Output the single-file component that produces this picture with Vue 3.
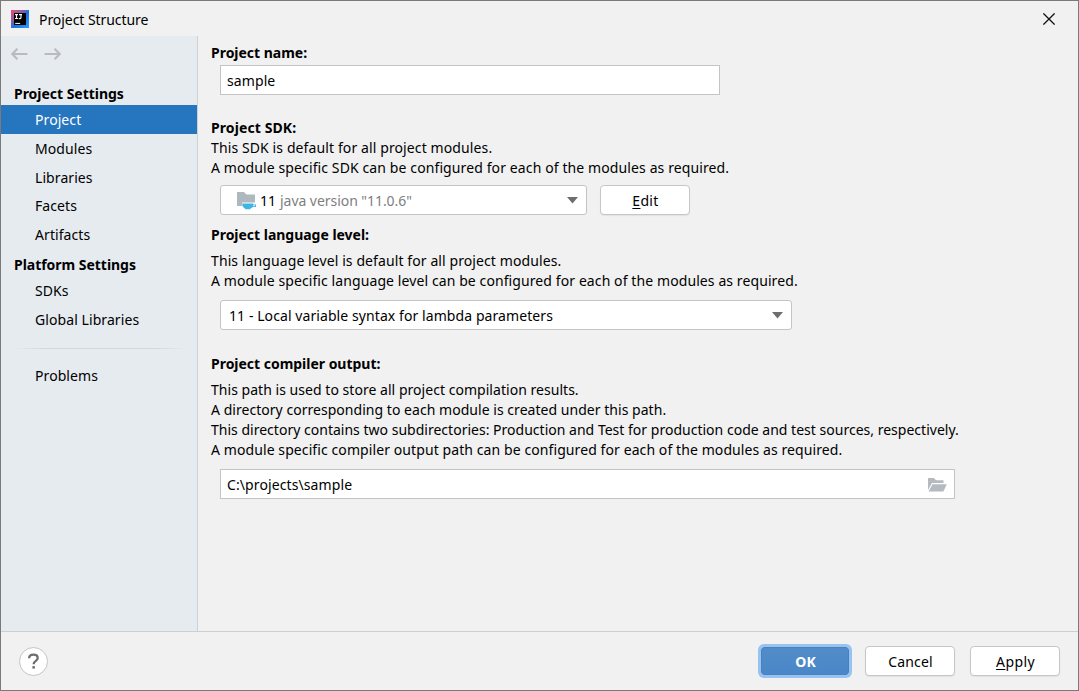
<script setup>
import { ref } from 'vue'

const selected = ref('Project')
const groups = [
  { title: 'Project Settings', items: ['Project', 'Modules', 'Libraries', 'Facets', 'Artifacts'] },
  { title: 'Platform Settings', items: ['SDKs', 'Global Libraries'] },
]
const projectName = ref('sample')
const outputPath = ref('C:\\projects\\sample')
</script>

<template>
  <div class="window">
    <header class="titlebar">
      <svg class="logo" width="18" height="18" viewBox="0 0 18 18">
        <defs>
          <linearGradient id="logo-bg" x1="0" y1="0" x2="1" y2="1">
            <stop offset="0" stop-color="#f0477c" />
            <stop offset="0.3" stop-color="#9b5a9c" />
            <stop offset="0.55" stop-color="#1473e0" />
            <stop offset="1" stop-color="#2f9bff" />
          </linearGradient>
        </defs>
        <rect width="18" height="18" fill="url(#logo-bg)" />
        <rect x="3" y="3" width="12" height="12" fill="#000" />
        <path d="M4 4.6h3M5.5 4.6v4M4 8.5h3M8 4.6h3M10 4.6v3q0 1-1 1H7.8" fill="none" stroke="#fff" stroke-width="1.1" />
        <path d="M4.2 13.4h5" stroke="#fff" stroke-width="1" />
      </svg>
      <span class="title">Project Structure</span>
      <svg class="close" width="12" height="12" viewBox="0 0 12 12">
        <path d="M0.4 0.4L11.6 11.6M11.6 0.4L0.4 11.6" stroke="#111" stroke-width="1.3" />
      </svg>
    </header>

    <div class="body">
      <aside class="sidebar">
        <div class="history">
          <svg width="17" height="12" viewBox="0 0 17 12" class="arrow">
            <path d="M16.4 6H1.2M6.4 0.8L1.2 6l5.2 5.2" />
          </svg>
          <svg width="17" height="12" viewBox="0 0 17 12" class="arrow">
            <path d="M0.6 6h15.2M10.6 0.8L15.8 6l-5.2 5.2" />
          </svg>
        </div>
        <section v-for="g in groups" :key="g.title">
          <h2 class="group">{{ g.title }}</h2>
          <div
            v-for="item in g.items"
            :key="item"
            class="item"
            :class="{ active: item === selected }"
            @click="selected = item"
          >{{ item }}</div>
        </section>
        <div class="rule"></div>
        <div class="item">Problems</div>
      </aside>

      <main class="content">
        <h3>Project name:</h3>
        <div class="field name"><span class="sample">{{ projectName }}</span></div>

        <h3 class="sdk-title">Project SDK:</h3>
        <p class="wide">This SDK is default for all project modules.</p>
        <p class="medium">A module specific SDK can be configured for each of the modules as required.</p>
        <div class="sdk-row">
          <div class="combo sdk">
            <svg class="sdk-icon" width="20" height="18" viewBox="0 0 20 18">
              <path d="M0 0h7l2.5 2.5H18V10.5H5V14H0z" fill="#afb8be" />
              <path d="M5.2 11.5h11v.9h2.8v2.6h-3.2q-.7 1-2 1.3l-.6 1H8.4l-.7-1q-2.5-1-2.5-4.8z" fill="#3eb5e2" />
              <path d="M16.2 13.2h1.7v1h-1.8z" fill="#fff" />
            </svg>
            <span class="ver">11</span>
            <span class="detail">java version "11.0.6"</span>
            <svg class="caret" width="11" height="7" viewBox="0 0 11 7"><path d="M0 0h11L5.5 6.6z" /></svg>
          </div>
          <button class="btn edit"><span><u>E</u>dit</span></button>
        </div>

        <h3 class="level-title">Project language level:</h3>
        <p class="language">This language level is default for all project modules.</p>
        <p class="language">A module specific language level can be configured for each of the modules as required.</p>
        <div class="combo level">
          <span class="level-text">11 - Local variable syntax for lambda parameters</span>
          <svg class="caret" width="11" height="7" viewBox="0 0 11 7"><path d="M0 0h11L5.5 6.6z" /></svg>
        </div>

        <h3 class="output-title">Project compiler output:</h3>
        <p class="narrow">This path is used to store all project compilation results.</p>
        <p class="narrow">A directory corresponding to each module is created under this path.</p>
        <p class="tight">This directory contains two subdirectories: Production and Test for production code and test sources, respectively.</p>
        <p class="regular">A module specific compiler output path can be configured for each of the modules as required.</p>
        <div class="field path">
          <span class="path-text">{{ outputPath }}</span>
          <svg class="folder" width="19" height="14" viewBox="0 0 19 14">
            <path d="M0 0h6l2 2.2h7.5V5H4L0 12z" fill="#b4bac0" />
            <path d="M4.4 6.2H18.8L15.4 13.6H0.6z" fill="#b4bac0" />
          </svg>
        </div>
      </main>
    </div>

    <footer class="footer">
      <button class="help">
        <svg width="13" height="17" viewBox="0 0 13 17">
          <path d="M2.1 5.3Q2.1 1.7 6.4 1.7Q10.7 1.7 10.7 5Q10.7 6.7 8.6 8.1Q6.6 9.4 6.6 11.3" fill="none" stroke="#6e6e6e" stroke-width="2.3" />
          <rect x="5.4" y="13.1" width="2.5" height="2.5" fill="#6e6e6e" />
        </svg>
      </button>
      <button class="btn ok"><span>OK</span></button>
      <button class="btn"><span class="cancel">Cancel</span></button>
      <button class="btn"><span class="apply"><u>A</u>pply</span></button>
    </footer>
  </div>
</template>

<style>
body { margin: 0; }
</style>

<style scoped>
* { box-sizing: border-box; }
.window {
  width: 1079px;
  height: 691px;
  display: flex;
  flex-direction: column;
  border: 1px solid #7b7a7b;
  background: #f1f1f1;
  color: #000;
  font: 14px/20px "Noto Sans", "Open Sans", sans-serif;
  white-space: nowrap;
  overflow: hidden;
}
.titlebar {
  flex: none;
  height: 35px;
  display: flex;
  align-items: center;
  padding: 1px 23px 0 10px;
}
.title { margin-left: 10px; padding-top: 1px; letter-spacing: -0.06px; }
.close { margin-left: auto; }
.body { flex: none; height: 596px; display: flex; border-bottom: 1px solid #cfcfcf; }
.sidebar { width: 197px; background: #e6ebf0; border-right: 1px solid #cdd1d4; }
.history { height: 47px; display: flex; gap: 16px; padding: 12px 0 0 10px; }
.arrow { fill: none; stroke: #b9bbbd; stroke-width: 2.1; }
.group { margin: 0; padding-left: 13px; height: 22px; font-size: 14px; line-height: 22px; font-weight: 700; letter-spacing: -0.03px; }
section + section .group { height: 28px; line-height: 32px; }
.item { height: 28.8px; line-height: 29px; padding-left: 34px; letter-spacing: 0.08px; }
.active { background: #2675bf; color: #fff; }
section + section .item { line-height: 28px; }
.rule {
  height: 1px;
  margin: 13px 10px 12px 12px;
  background: linear-gradient(90deg, transparent, #d3d7db 18%, #d3d7db 82%, transparent);
}
.content { padding: 7px 0 0 13px; }
h3 { margin: 0; font-size: 14px; line-height: 20px; font-weight: 700; letter-spacing: -0.02px; }
p { margin: 0; }
.wide { letter-spacing: 0.11px; }
.medium { letter-spacing: 0.11px; }
.language { letter-spacing: 0.095px; }
.regular { letter-spacing: 0.09px; }
.narrow { letter-spacing: 0.035px; }
.tight { letter-spacing: 0.012px; }
.field, .combo {
  height: 30px;
  margin-left: 9px;
  display: flex;
  align-items: center;
  background: #fff;
  border: 1px solid #c4c4c4;
}
.field span, .combo span { padding-top: 2px; }
.combo { border-radius: 3px; }
.name { width: 500px; margin-top: 2px; padding-left: 6px; }
.sample { letter-spacing: 0.1px; }
.sdk-title { margin-top: 23px; letter-spacing: 0.1px; }
.sdk-row { display: flex; gap: 13px; margin-top: 7px; }
.sdk { width: 367px; padding: 0 8px 0 16px; }
.sdk-icon { margin-top: 2px; }
.ver { margin-left: 3px; }
.detail { margin-left: 4px; color: #808080; letter-spacing: -0.05px; }
.caret { margin-left: auto; fill: #6e6e6e; }
.level-title { margin-top: 10px; margin-bottom: 6px; }
.level { width: 572px; margin-top: 9px; padding: 0 8px; }
.level-text { letter-spacing: 0.08px; }
.output-title { margin-top: 24px; margin-bottom: 6px; }
.path { width: 735px; margin-top: 9px; padding: 0 7px 0 6px; }
.path-text { letter-spacing: 0.1px; }
.folder { margin-left: auto; margin-top: 1px; }
.btn {
  width: 90px;
  height: 30px;
  padding: 2px 0 0 1px;
  font: inherit;
  color: #000;
  background: #fff;
  border: 1px solid #c6c6c6;
  border-radius: 4px;
  box-shadow: 0 1px 1px #e2e2e2;
}
.btn u { text-decoration-thickness: 1px; text-underline-offset: 2px; }
.edit { letter-spacing: 0.3px; }
.cancel { letter-spacing: 0.15px; }
.apply { letter-spacing: 0.4px; }
.footer { flex: 1; display: flex; align-items: center; gap: 15px; padding: 0 18px; }
.help {
  width: 29px;
  height: 29px;
  margin-right: auto;
  padding: 0;
  display: flex;
  align-items: center;
  justify-content: center;
  background: #fff;
  border: 1px solid #c4c4c4;
  border-radius: 50%;
}
.btn.ok {
  width: 88px;
  height: 28px;
  margin-right: 1px;
  color: #fff;
  font-weight: 700;
  background: linear-gradient(#528cc8, #4a87c8);
  border-color: #4a80bd;
  border-radius: 3px;
  box-shadow: 0 0 0 3px #97c3f3;
}
</style>
